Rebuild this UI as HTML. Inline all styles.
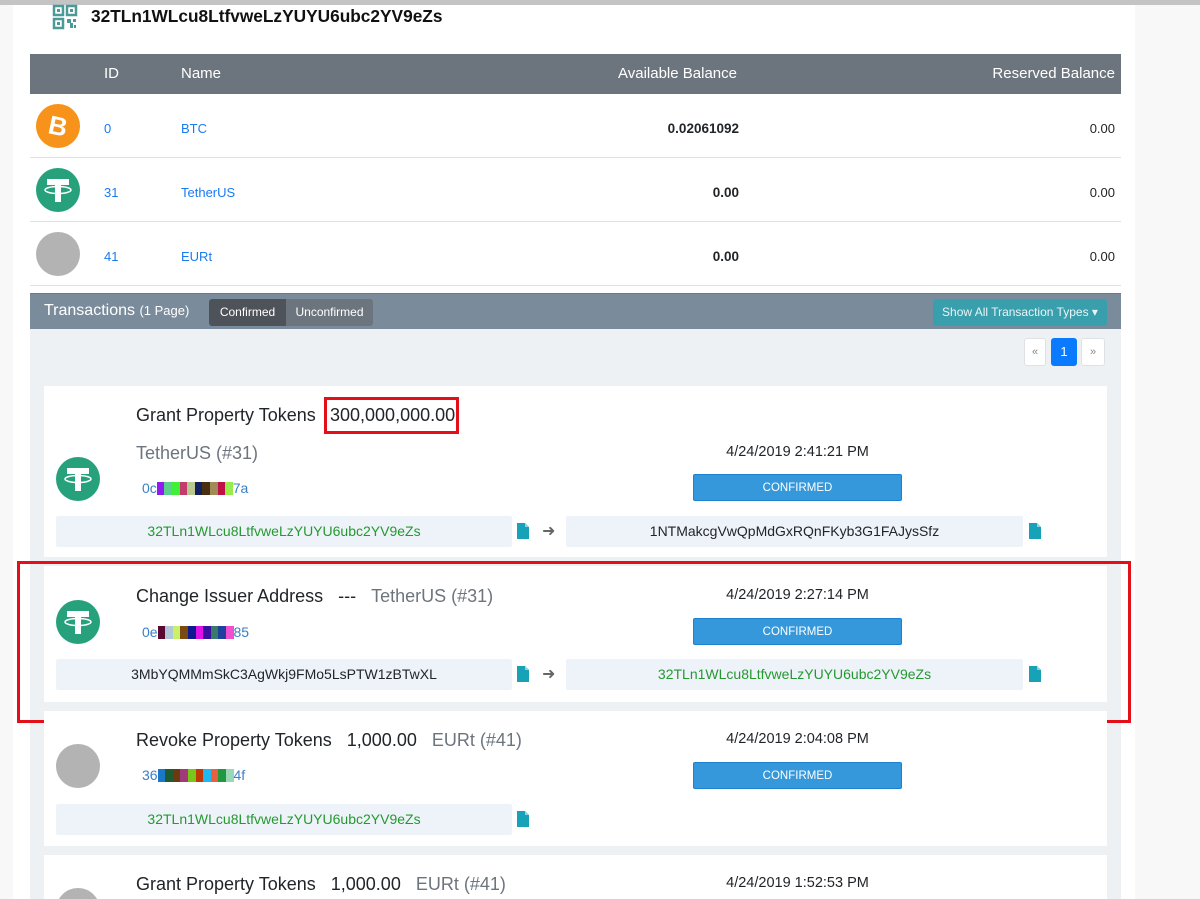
<!DOCTYPE html>
<html style="overflow:hidden;width:1200px;height:899px"><head><meta charset="utf-8"><style>
*{box-sizing:border-box;margin:0;padding:0}
body{width:1200px;height:899px;overflow:hidden;background:#fff;font-family:"Liberation Sans",sans-serif;position:relative;color:#212529}
.a{position:absolute}
.lg{left:0;top:0;width:13px;height:899px;background:#f8f8f8}
.rg{left:1135px;top:0;width:65px;height:899px;background:#f8f8f8}
.top{left:0;top:0;width:1200px;height:5px;background:#c4c4c4}
.th{left:30px;top:54px;width:1091px;height:40px;background:#6c757d;color:#fff;font-size:15px}
.th span{position:absolute;top:11px}
.row{left:30px;width:1091px;height:64px;border-bottom:1px solid #dee2e6;font-size:13px}
.row span{position:absolute;top:27px}
.blue{color:#1a7bf0}
.coin{position:absolute;left:6px;top:10px}
.txh{left:30px;top:293px;width:1091px;height:36px;background:#7a8b9b;border-top:1px solid #6a7a88}
.txbody{left:30px;top:329px;width:1091px;height:570px;background:#eef1f3}
.card{left:44px;width:1063px;background:#fff;overflow:hidden}
.title{position:absolute;left:92px;font-size:18px;color:#212529;white-space:nowrap}
.grey{color:#6c757d}
.hash{position:absolute;left:98px;font-size:14px;color:#3a7fc8;display:flex;align-items:center;height:16px}
.hash i{display:inline-block;width:7.6px;height:13px}
.date{position:absolute;left:629px;width:249px;text-align:center;font-size:14.5px}
.btn{position:absolute;left:649px;width:209px;height:27px;background:#3498db;border:1px solid #1f7fd0;border-radius:2px;color:#fff;font-size:11.5px;text-align:center;line-height:27px}
.addr{position:absolute;width:456px;height:31px;background:#eef3fa;border-radius:2px;text-align:center;font-size:14px;line-height:31px}
.green{color:#25992f}
.cp{position:absolute}
.arr{position:absolute;color:#666;font-size:16px}
</style></head><body>
<div class="a lg"></div><div class="a rg"></div><div class="a top"></div>
<svg class="a" style="left:52px;top:4px" width="26" height="26" viewBox="0 0 26 26" fill="none" stroke="#4a9a9a" stroke-width="2.5"><rect x="2" y="2" width="9" height="9"/><rect x="15" y="2" width="9" height="9"/><rect x="2" y="15" width="9" height="9"/><g fill="#4a9a9a" stroke="none"><rect x="5" y="5" width="3" height="3"/><rect x="18" y="5" width="3" height="3"/><rect x="5" y="18" width="3" height="3"/><rect x="15" y="15" width="4" height="4"/><rect x="21" y="15" width="3" height="3"/><rect x="18" y="19" width="3" height="5"/><rect x="22" y="21" width="2" height="3"/></g></svg>
<div class="a" style="left:91px;top:6px;font-size:17.3px;font-weight:bold;color:#111">32TLn1WLcu8LtfvweLzYUYU6ubc2YV9eZs</div>

<div class="a th"><span style="left:74px">ID</span><span style="left:151px">Name</span><span style="left:588px">Available Balance</span><span style="right:6px">Reserved Balance</span></div>

<div class="a row" style="top:94px">
<svg class="coin" width="44" height="44" viewBox="0 0 44 44"><circle cx="22" cy="22" r="22" fill="#f7931a"/><text x="22" y="31" font-size="26" font-weight="bold" fill="#fff" text-anchor="middle" font-family="Liberation Sans" transform="rotate(12 22 22)">B</text></svg>
<span class="blue" style="left:74px">0</span><span class="blue" style="left:151px">BTC</span><span style="right:382px;font-weight:bold;font-size:13.5px">0.02061092</span><span style="right:6px">0.00</span></div>
<div class="a row" style="top:158px">
<svg class="coin" width="44" height="44" viewBox="0 0 44 44"><circle cx="22" cy="22" r="22" fill="#26a17b"/><rect x="11" y="11" width="22" height="6" fill="#fff"/><rect x="19" y="11" width="6" height="23" fill="#fff"/><ellipse cx="22" cy="22" rx="13" ry="3.5" fill="none" stroke="#fff" stroke-width="1.5"/></svg>
<span class="blue" style="left:74px">31</span><span class="blue" style="left:151px">TetherUS</span><span style="right:382px;font-weight:bold;font-size:13.5px">0.00</span><span style="right:6px">0.00</span></div>
<div class="a row" style="top:222px">
<svg class="coin" width="44" height="44"><circle cx="22" cy="22" r="22" fill="#b3b3b3"/></svg>
<span class="blue" style="left:74px">41</span><span class="blue" style="left:151px">EURt</span><span style="right:382px;font-weight:bold;font-size:13.5px">0.00</span><span style="right:6px">0.00</span></div>

<div class="a txh">
<span class="a" style="left:14px;top:8px;color:#fff;font-size:16px;white-space:nowrap">Transactions <span style="font-size:13px">(1 Page)</span></span>
<div class="a" style="left:179px;top:5px;width:77px;height:27px;background:#4d5359;border-radius:3px 0 0 3px;color:#fff;font-size:12px;text-align:center;line-height:27px">Confirmed</div>
<div class="a" style="left:256px;top:5px;width:87px;height:27px;background:#6c757d;border-radius:0 3px 3px 0;color:#fff;font-size:12px;text-align:center;line-height:27px">Unconfirmed</div>
<div class="a" style="left:903px;top:5px;width:174px;height:27px;background:#3a9fad;border-radius:3px;color:#e8f4f6;font-size:12px;text-align:center;line-height:27px">Show All Transaction Types ▾</div>
</div>
<div class="a txbody"></div>
<div class="a" style="left:1024px;top:338px;width:22px;height:28px;background:#fff;border:1px solid #dee2e6;border-radius:3px;color:#888;font-size:11px;text-align:center;line-height:26px">«</div>
<div class="a" style="left:1051px;top:338px;width:26px;height:28px;background:#0a7bff;border-radius:3px;color:#fff;font-size:13px;text-align:center;line-height:28px">1</div>
<div class="a" style="left:1081px;top:338px;width:24px;height:28px;background:#fff;border:1px solid #dee2e6;border-radius:3px;color:#888;font-size:11px;text-align:center;line-height:26px">»</div>

<!-- card 1 -->
<div class="a card" style="top:386px;height:171px">
<div class="title" style="top:19px">Grant Property Tokens</div>
<div class="title" style="left:286px;top:19px">300,000,000.00</div>
<div class="title grey" style="top:57px">TetherUS (#31)</div>
<svg class="a" style="left:12px;top:71px" width="44" height="44" viewBox="0 0 44 44"><circle cx="22" cy="22" r="22" fill="#26a17b"/><rect x="11" y="11" width="22" height="6" fill="#fff"/><rect x="19" y="11" width="6" height="23" fill="#fff"/><ellipse cx="22" cy="22" rx="13" ry="3.5" fill="none" stroke="#fff" stroke-width="1.5"/></svg>
<div class="hash" style="top:94px">0c<i style="background:#8e1cf0"></i><i style="background:#5ad08e"></i><i style="background:#3ff036"></i><i style="background:#c23b6a"></i><i style="background:#b8c890"></i><i style="background:#132060"></i><i style="background:#4a2e12"></i><i style="background:#a08a58"></i><i style="background:#c01048"></i><i style="background:#96ec4a"></i>7a</div>
<div class="date" style="top:58px">4/24/2019 2:41:21 PM</div>
<div class="btn" style="top:88px">CONFIRMED</div>
<div class="addr green" style="left:12px;top:130px">32TLn1WLcu8LtfvweLzYUYU6ubc2YV9eZs</div>
<svg class="cp" style="left:473px;top:137px" width="12" height="16"><path d="M0 0h8l4 4v12H0z" fill="#17a2b8"/><path d="M8 0v4h4" fill="#8fd3de"/></svg>
<div class="arr" style="left:498px;top:135px">➜</div>
<div class="addr" style="left:522px;top:130px;width:457px">1NTMakcgVwQpMdGxRQnFKyb3G1FAJysSfz</div>
<svg class="cp" style="left:985px;top:137px" width="12" height="16"><path d="M0 0h8l4 4v12H0z" fill="#17a2b8"/><path d="M8 0v4h4" fill="#8fd3de"/></svg>
</div>
<div class="a" style="left:324px;top:397px;width:135px;height:37px;border:3px solid #e3101a"></div>

<!-- card 2 -->
<div class="a card" style="top:566px;height:136px">
<div class="title" style="top:20px">Change Issuer Address&nbsp;&nbsp; --- &nbsp;&nbsp;<span class="grey">TetherUS (#31)</span></div>
<svg class="a" style="left:12px;top:34px" width="44" height="44" viewBox="0 0 44 44"><circle cx="22" cy="22" r="22" fill="#26a17b"/><rect x="11" y="11" width="22" height="6" fill="#fff"/><rect x="19" y="11" width="6" height="23" fill="#fff"/><ellipse cx="22" cy="22" rx="13" ry="3.5" fill="none" stroke="#fff" stroke-width="1.5"/></svg>
<div class="hash" style="top:58px">0e<i style="background:#5a0a30"></i><i style="background:#b0c8d8"></i><i style="background:#c8f068"></i><i style="background:#7a4a10"></i><i style="background:#101a90"></i><i style="background:#e010e8"></i><i style="background:#3a10a0"></i><i style="background:#3a7a6a"></i><i style="background:#2040a0"></i><i style="background:#f050d0"></i>85</div>
<div class="date" style="top:21px">4/24/2019 2:27:14 PM</div>
<div class="btn" style="top:52px">CONFIRMED</div>
<div class="addr" style="left:12px;top:93px">3MbYQMMmSkC3AgWkj9FMo5LsPTW1zBTwXL</div>
<svg class="cp" style="left:473px;top:100px" width="12" height="16"><path d="M0 0h8l4 4v12H0z" fill="#17a2b8"/><path d="M8 0v4h4" fill="#8fd3de"/></svg>
<div class="arr" style="left:498px;top:98px">➜</div>
<div class="addr green" style="left:522px;top:93px;width:457px">32TLn1WLcu8LtfvweLzYUYU6ubc2YV9eZs</div>
<svg class="cp" style="left:985px;top:100px" width="12" height="16"><path d="M0 0h8l4 4v12H0z" fill="#17a2b8"/><path d="M8 0v4h4" fill="#8fd3de"/></svg>
</div>
<div class="a" style="left:17px;top:561px;width:1114px;height:162px;border:3px solid #e3101a"></div>

<!-- card 3 -->
<div class="a card" style="top:711px;height:135px">
<div class="title" style="top:19px">Revoke Property Tokens&nbsp;&nbsp; 1,000.00&nbsp;&nbsp; <span class="grey">EURt (#41)</span></div>
<svg class="a" style="left:12px;top:33px" width="44" height="44"><circle cx="22" cy="22" r="22" fill="#b3b3b3"/></svg>
<div class="hash" style="top:56px">36<i style="background:#1a78c8"></i><i style="background:#205a30"></i><i style="background:#6a3a10"></i><i style="background:#a03a78"></i><i style="background:#78c81a"></i><i style="background:#c03a08"></i><i style="background:#20b8f0"></i><i style="background:#e86040"></i><i style="background:#209840"></i><i style="background:#98d8b8"></i>4f</div>
<div class="date" style="top:20px">4/24/2019 2:04:08 PM</div>
<div class="btn" style="top:51px">CONFIRMED</div>
<div class="addr green" style="left:12px;top:93px">32TLn1WLcu8LtfvweLzYUYU6ubc2YV9eZs</div>
<svg class="cp" style="left:473px;top:100px" width="12" height="16"><path d="M0 0h8l4 4v12H0z" fill="#17a2b8"/><path d="M8 0v4h4" fill="#8fd3de"/></svg>
</div>

<!-- card 4 -->
<div class="a card" style="top:855px;height:44px">
<div class="title" style="top:19px">Grant Property Tokens&nbsp;&nbsp; 1,000.00&nbsp;&nbsp; <span class="grey">EURt (#41)</span></div>
<svg class="a" style="left:12px;top:33px" width="44" height="44"><circle cx="22" cy="22" r="22" fill="#b3b3b3"/></svg>
<div class="date" style="top:20px">4/24/2019 1:52:53 PM</div>
</div>
</body></html>
